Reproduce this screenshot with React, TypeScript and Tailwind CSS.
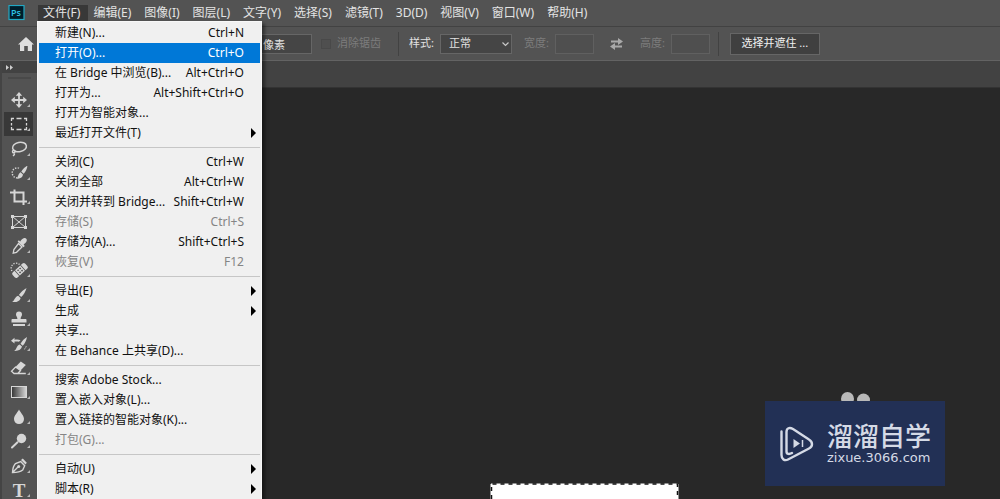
import React from 'react';

type MenuEntry = {
  label: string;
  shortcut?: string;
  submenu?: boolean;
  disabled?: boolean;
  active?: boolean;
};

const menuTitles = [
  '文件(F)',
  '编辑(E)',
  '图像(I)',
  '图层(L)',
  '文字(Y)',
  '选择(S)',
  '滤镜(T)',
  '3D(D)',
  '视图(V)',
  '窗口(W)',
  '帮助(H)',
];

const fileMenu: MenuEntry[][] = [
  [
    { label: '新建(N)...', shortcut: 'Ctrl+N' },
    { label: '打开(O)...', shortcut: 'Ctrl+O', active: true },
    { label: '在 Bridge 中浏览(B)...', shortcut: 'Alt+Ctrl+O' },
    { label: '打开为...', shortcut: 'Alt+Shift+Ctrl+O' },
    { label: '打开为智能对象...' },
    { label: '最近打开文件(T)', submenu: true },
  ],
  [
    { label: '关闭(C)', shortcut: 'Ctrl+W' },
    { label: '关闭全部', shortcut: 'Alt+Ctrl+W' },
    { label: '关闭并转到 Bridge...', shortcut: 'Shift+Ctrl+W' },
    { label: '存储(S)', shortcut: 'Ctrl+S', disabled: true },
    { label: '存储为(A)...', shortcut: 'Shift+Ctrl+S' },
    { label: '恢复(V)', shortcut: 'F12', disabled: true },
  ],
  [
    { label: '导出(E)', submenu: true },
    { label: '生成', submenu: true },
    { label: '共享...' },
    { label: '在 Behance 上共享(D)...' },
  ],
  [
    { label: '搜索 Adobe Stock...' },
    { label: '置入嵌入对象(L)...' },
    { label: '置入链接的智能对象(K)...' },
    { label: '打包(G)...', disabled: true },
  ],
  [
    { label: '自动(U)', submenu: true },
    { label: '脚本(R)', submenu: true },
  ],
];

// tool icons share a 28x22 box, drawn around (15, 11)
const icons: Record<string, React.ReactNode> = {
  move: (
    <>
      <path d="M15 5v12M9 11h12" fill="none" stroke="currentColor" strokeWidth="1.8" />
      <path d="M15 3l3.2 3.8h-6.400zM15 19l3.200-3.800h-6.400zM7 11l3.800-3.200v6.400zM23 11l-3.800-3.200v6.400z" />
    </>
  ),
  marquee: (
    <path
      d="M7.5 8V5.5H10M12.5 5.5h5M20 5.5h2.5V8M22.5 10v2.500M22.5 14v2.500H20M17.5 16.500h-5M10 16.500H7.5V14M7.500 12.500V10"
      fill="none"
      stroke="currentColor"
      strokeWidth="1.3"
    />
  ),
  lasso: (
    <g fill="none" stroke="currentColor" strokeWidth="1.5">
      <ellipse cx="15.500" cy="9" rx="7" ry="4.700" transform="rotate(-12 15.500 9)" />
      <path d="M10 12c-1.800.5-2 2.700-.2 2.800 1.700 0 1.700-2 .2-2.600M10.600 14.600c.2 1.500-.4 2.600-1.600 3.400" />
    </g>
  ),
  quick: (
    <>
      <path
        d="M15 6.200a5 5 0 1 0-1 9.600"
        fill="none"
        stroke="currentColor"
        strokeWidth="1.4"
        strokeDasharray="1.400 1.300"
      />
      <path d="M23.500 3.500c-2.400 1.400-4.700 3.600-6.200 6l2.400 2.200c2-2 3.500-5 3.800-8.200zM16.600 10.300l2.400 2.200c-.3 3.200-3 4.600-6.500 4 1.800-.8 1.300-4.400 4.100-6.200z" />
    </>
  ),
  crop: (
    <path
      d="M10.500 3.500v12h12.500M6 6.500h13.500V19"
      fill="none"
      stroke="currentColor"
      strokeWidth="2"
    />
  ),
  frame: (
    <>
      <path d="M8.500 5.500h13v11h-13zM8.500 5.500l13 11M21.500 5.500l-13 11" fill="none" stroke="currentColor" />
      <path d="M7 4h3v3H7zM20 4h3v3h-3zM7 15h3v3H7zM20 15h3v3h-3z" />
    </>
  ),
  eyedropper: (
    <>
      <path d="M14.500 8.500l3.500 3.500-5.500 5.300-3.300.9.700-3.700z" fill="none" stroke="currentColor" strokeWidth="1.3" />
      <path d="M13.600 6.500l1.200-1.200 1.400 1.100c1-1.300 2.500-3.100 4-3.400 2-.2 3 1.300 2.500 3-.5 1.400-2 2.600-3.100 3.600l1.200 1.400-1.400 1.300z" />
    </>
  ),
  heal: (
    <>
      <path
        d="M8 12a5 5 0 0 1 7.500-6.500"
        fill="none"
        stroke="currentColor"
        strokeWidth="1.300"
        strokeDasharray="1.300 1.300"
      />
      <g transform="rotate(-42 16 11.500)">
        <path d="M9.500 8h2.200v7H9.500a2 2 0 0 1-2-2v-3a2 2 0 0 1 2-2zM20.300 8h2.200a2 2 0 0 1 2 2v3a2 2 0 0 1-2 2h-2.200z" />
        <path
          fillRule="evenodd"
          d="M12.500 8h7v7h-7zM14 9.300v1.500h1.500V9.300zM16.700 9.300v1.500h1.500V9.300zM14 12.200v1.500h1.500v-1.500zM16.700 12.200v1.500h1.500v-1.500z"
        />
      </g>
    </>
  ),
  brush: (
    <path d="M22.500 4c-3 1.700-5.700 4.200-7.600 7l2.300 2.100c2.500-2.400 4.500-5.600 5.300-9.100zM14.200 11.700l2.400 2.200c-.5 3.300-4.200 4.600-8.600 4 2.700-1 2.500-5.200 6.200-6.200z" />
  ),
  stamp: (
    <path d="M15 3.500a3 3 0 0 1 3 3c0 1.800-1.400 2.200-1.400 4.500h4.900c.6 0 1 .4 1 1v2.500h-15V12c0-.6.400-1 1-1h4.900c0-2.300-1.400-2.700-1.400-4.500a3 3 0 0 1 3-3zM9 16h12v2H9z" />
  ),
  history: (
    <>
      <path d="M23 4c-3 1.700-5.100 4.200-6.500 6.800l2.200 2c2.200-2.400 3.700-5.300 4.300-8.800zM15.700 11.500l2.300 2.100c-.6 3-3.400 4.600-8 4.300 2.700-1 2.300-5.300 5.700-6.400z" />
      <path d="M7 7.800l3.500-3v2c2.400-.5 4.500-.3 6 .5l-1.600 1.500c-1.300-.5-2.900-.5-4.400-.2v2z" />
      <path d="M20 16.500a6 6 0 0 0 2.400-4.500" fill="none" stroke="currentColor" strokeDasharray="1.400 1.200" />
    </>
  ),
  eraser: (
    <>
      <path d="M16.800 4.500l5 3.500-5.300 5.500-5-3.500z" />
      <path d="M11.500 10l5 3.500-2.700 3H10l-2.500-2.300zM13.800 16.500h8" fill="none" stroke="currentColor" strokeWidth="1.300" />
    </>
  ),
  gradient: (
    <>
      <defs>
        <linearGradient id="ramp">
          <stop offset="0" stopColor="#333" />
          <stop offset="1" stopColor="#d8d8d8" />
        </linearGradient>
      </defs>
      <rect x="7.500" y="5.500" width="15" height="11" fill="url(#ramp)" stroke="currentColor" />
    </>
  ),
  blur: <path d="M15 3.500c1.500 3.200 5 6 5 9.600a5 5 0 0 1-10 0c0-3.600 3.500-6.400 5-9.600z" />,
  dodge: (
    <>
      <circle cx="17.500" cy="8.500" r="4.700" />
      <path d="M13.500 12.300L8 17.500" stroke="currentColor" strokeWidth="2" strokeLinecap="round" />
    </>
  ),
  pen: (
    <>
      <path d="M8.500 17.500c.2-3.500 1-7 3-9l5.200-2 4 4.200-2 4.300c-2.500 2-6.500 2.500-10.200 2.500zl5.500-5.500" fill="none" stroke="currentColor" strokeWidth="1.400" />
      <circle cx="14.700" cy="11.500" r="1.500" />
      <path d="M17 5l1.800-1.500 4 4.200L21.500 9.500z" />
    </>
  ),
};

const toolGroups = [
  [
    { id: 'move', name: '移动工具' },
    { id: 'marquee', name: '矩形选框工具' },
  ],
  [
    { id: 'lasso', name: '套索工具' },
    { id: 'quick', name: '快速选择工具' },
    { id: 'crop', name: '裁剪工具' },
  ],
  [
    { id: 'frame', name: '图框工具' },
    { id: 'eyedropper', name: '吸管工具' },
    { id: 'heal', name: '修复画笔工具' },
  ],
  [
    { id: 'brush', name: '画笔工具' },
    { id: 'stamp', name: '仿制图章工具' },
  ],
  [
    { id: 'history', name: '历史记录画笔工具' },
    { id: 'eraser', name: '橡皮擦工具' },
    { id: 'gradient', name: '渐变工具' },
  ],
  [
    { id: 'blur', name: '模糊工具' },
    { id: 'dodge', name: '减淡工具' },
  ],
  [
    { id: 'pen', name: '钢笔工具' },
    { id: 'type', name: '文字工具' },
  ],
];

function FileMenu() {
  return (
    <div className="absolute left-[-1px] top-full z-20 w-[225px] border border-[#f8f8f8] bg-[#f0f0f0] pb-2 pt-px shadow-[3px_3px_3px_rgba(0,0,0,0.4)]">
      {fileMenu.map((group, index) => (
        <div key={index}>
          {index > 0 && <hr className="mx-px my-1 border-t border-[#c6c6c6]" />}
          {group.map((entry) => (
            <button
              key={entry.label}
              disabled={entry.disabled}
              className={`flex h-5 w-full items-center justify-between border-x border-[#f0f0f0] pl-4 text-left text-xs whitespace-nowrap ${
                entry.submenu ? 'pr-1' : 'pr-4'
              } ${entry.active ? 'bg-[#0078d7] text-white' : entry.disabled ? 'text-[#858585]' : 'text-[#111]'}`}
            >
              <span>{entry.label}</span>
              {entry.shortcut && <span>{entry.shortcut}</span>}
              {entry.submenu && (
                <svg width="5" height="10" viewBox="0 0 5 10" fill="#000">
                  <path d="M0 0l5 5-5 5z" />
                </svg>
              )}
            </button>
          ))}
        </div>
      ))}
    </div>
  );
}

function MenuBar() {
  return (
    <header className="flex h-[27px] shrink-0 items-start border-b border-[#424242] pl-2 pt-[5px]">
      <svg width="17" height="16" viewBox="0 0 17 16" className="mr-[13px]">
        <rect x="1" y="0.500" width="15" height="14" fill="#001d2b" stroke="#22a8c4" strokeWidth="1.200" />
        <text x="3" y="11" fontSize="9" fontWeight="600" fill="#2fc3e6" fontFamily="Open Sans, sans-serif">
          Ps
        </text>
      </svg>
      <nav className="flex">
        {menuTitles.map((title, index) => (
          <div key={title} className="relative">
            <button
              className={`flex h-4 items-center whitespace-nowrap pl-[5px] pr-[8px] text-xs text-[#e4e4e4] ${
                index === 0 ? 'bg-[#383838]' : ''
              }`}
            >
              {title}
            </button>
            {index === 0 && <FileMenu />}
          </div>
        ))}
      </nav>
    </header>
  );
}

function OptionsBar() {
  return (
    <div className="flex h-[34px] shrink-0 items-center border-b border-[#636363] text-[11px] whitespace-nowrap text-[#e2e2e2]">
      <button aria-label="主页" className="ml-[18px] mr-[216px]">
        <svg width="16" height="14" viewBox="0 0 16 14" fill="#dedede">
          <path d="M8 0l8 7.500h-2V14H9.800V9H6.200v5H2V7.500H0z" />
        </svg>
      </button>
      <input
        aria-label="羽化"
        defaultValue="像素"
        className="h-5 w-[62px] border border-[#666] bg-[#454545] pl-3 outline-none"
      />
      <label className="ml-[9px] flex items-center gap-[6px] text-[#7c7c7c]">
        <input type="checkbox" disabled className="size-[10px] appearance-none border border-[#494949] bg-[#4f4f4f]" />
        消除锯齿
      </label>
      <div className="ml-[17px] mr-[10px] h-6 w-px bg-[#424242]" />
      <label htmlFor="style">样式:</label>
      <div className="relative ml-[6px]">
        <select
          id="style"
          className="block h-5 w-[72px] appearance-none border border-[#666] bg-[#454545] pl-2 text-[11px] outline-none"
        >
          <option>正常</option>
        </select>
        <svg className="pointer-events-none absolute right-[3px] top-2" width="7" height="5" viewBox="0 0 7 5">
          <path d="M0.500 0.500l3 3 3-3" fill="none" stroke="#c8c8c8" strokeWidth="1.200" />
        </svg>
      </div>
      <label htmlFor="width" className="ml-3 text-[#7c7c7c]">
        宽度:
      </label>
      <input id="width" disabled className="ml-[6px] h-5 w-[39px] border border-[#606060] bg-[#4f4f4f]" />
      <button aria-label="交换" className="ml-4 mr-[17px]">
        <svg width="13" height="12" viewBox="0 0 13 12" fill="#a9a9a9">
          <path d="M1 2.500h7V0l5 3.500L8 7V4.500H1zM12 7.500H5V5L0 8.500 5 12V9.500h7z" />
        </svg>
      </button>
      <label htmlFor="height" className="text-[#7c7c7c]">
        高度:
      </label>
      <input id="height" disabled className="ml-[6px] h-5 w-[39px] border border-[#606060] bg-[#4f4f4f]" />
      <div className="ml-2 mr-[11px] h-6 w-px bg-[#424242]" />
      <button className="h-[22px] w-[90px] border border-[#666] bg-[#404040] text-[#f0f0f0]">选择并遮住 ...</button>
    </div>
  );
}

function Toolbar() {
  return (
    <aside className="flex w-[37px] shrink-0 flex-col border-l-2 border-[#444] bg-[#535353]">
      <div className="flex h-3 shrink-0 items-center bg-[#424242] pl-1">
        <svg width="7" height="5" viewBox="0 0 7 5" fill="#cfcfcf">
          <path d="M0 0l3 2.500L0 5zM4 0l3 2.500L4 5z" />
        </svg>
      </div>
      <div className="mx-[6px] mb-[9px] mt-1 h-[2px] shrink-0 bg-[#494949]" />
      <div className="flex flex-col gap-px pl-[2px]">
        {toolGroups.map((group) => (
          <div key={group[0].id}>
            {group.map((tool) => (
              <button
                key={tool.id}
                aria-label={tool.name}
                className={`flex h-6 w-[29px] items-center ${tool.id === 'marquee' ? 'bg-[#383838]' : ''}`}
              >
                <svg width="28" height="22" viewBox="0 0 28 22" fill="currentColor" className="text-[#d6d6d6]">
                  {icons[tool.id] || (
                    <text x="15" y="18" fontSize="19" fontWeight="700" textAnchor="middle" fontFamily="Liberation Serif, serif">
                      T
                    </text>
                  )}
                  {tool.id !== 'frame' && <path d="M26 15v3h-3z" fill="#b8b8b8" />}
                </svg>
              </button>
            ))}
          </div>
        ))}
      </div>
    </aside>
  );
}

function Watermark() {
  return (
    <div className="absolute bottom-[13px] right-[55px] flex h-[85px] w-[180px] items-center bg-[#223055] pl-[15px] text-[#d5dae6]">
      <svg width="34" height="36" viewBox="0 0 34 36" fill="none" stroke="currentColor" strokeWidth="2.400">
        <path d="M1.500 5.500V29c0 4 3 6.300 6.500 4.500l21-11c4-2 4-6.500 0-9L13 3C9.500 1 6.500 2 6.500 6v19.500c0 3 3 3 5.500 1.500" strokeLinecap="round" />
        <path d="M13.500 13l6.500 4.500-6.500 4.500z" fill="currentColor" stroke="none" />
        <path d="M22.500 14v7" strokeWidth="1.500" />
      </svg>
      <div className="ml-[13px]">
        <div className="text-[26px] font-medium leading-7">溜溜自学</div>
        <div className="font-['DejaVu_Sans'] text-[13px] leading-4">zixue.3066.com</div>
      </div>
    </div>
  );
}

export default function App() {
  return (
    <div className="flex h-screen flex-col overflow-hidden bg-[#535353] font-['Noto_Sans','Noto_Sans_CJK_SC',sans-serif]">
      <MenuBar />
      <OptionsBar />
      <div className="flex min-h-0 flex-1">
        <Toolbar />
        <main className="flex min-w-0 flex-1 flex-col">
          <div className="h-[27px] shrink-0 border-b border-[#333] bg-[#424242]" />
          <div className="relative flex-1 overflow-hidden bg-[#282828]">
            <svg className="absolute bottom-[94px] right-[129px]" width="30" height="13" viewBox="0 0 30 13" fill="#b9b9b9">
              <ellipse cx="6.500" cy="7" rx="6.500" ry="7" />
              <ellipse cx="22.500" cy="8" rx="6.500" ry="6.500" />
            </svg>
            <Watermark />
            <svg className="absolute bottom-0 left-[453px]" width="189" height="16" viewBox="0 0 189 16">
              <path d="M1 16V1h187v15" fill="#fff" stroke="#fff" />
              <path d="M1.500 16V1h186v15" fill="none" stroke="#111" strokeWidth="1.500" strokeDasharray="4 4" />
            </svg>
          </div>
        </main>
      </div>
    </div>
  );
}
